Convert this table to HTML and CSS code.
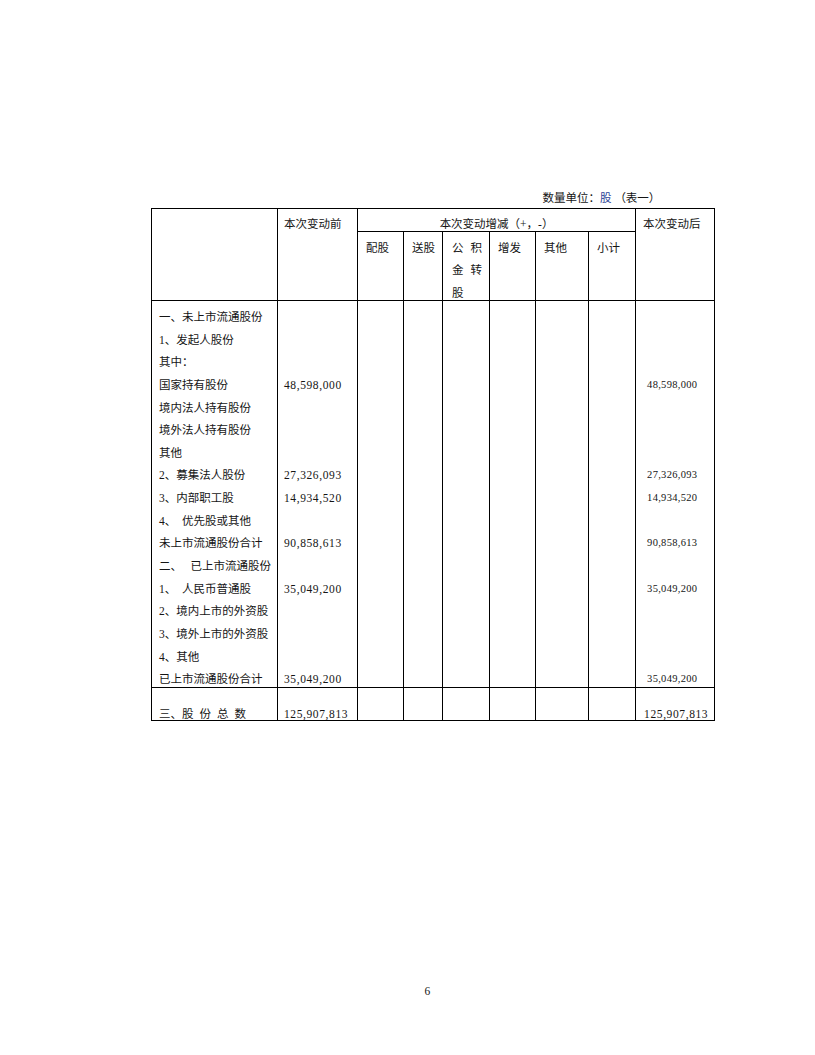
FILE: index.html
```html
<!DOCTYPE html>
<html lang="zh-CN">
<head>
<meta charset="utf-8">
<title>股本变动表</title>
<link rel="stylesheet" href="styles.css">
</head>
<body>
<div class="page">
  <div class="caption">数量单位：<span class="unit">股</span> （表一）</div>
  <table class="shares">
    <colgroup>
      <col class="c1"><col class="c2"><col class="c3"><col class="c4"><col class="c5"><col class="c6"><col class="c7"><col class="c8"><col class="c9">
    </colgroup>
    <tr class="h1">
      <td rowspan="2"></td>
      <td rowspan="2" class="hd p6">本次变动前</td>
      <td colspan="6" class="hd center">本次变动增减（+，-）</td>
      <td rowspan="2" class="hd p7">本次变动后</td>
    </tr>
    <tr class="h2">
      <td class="sub">配股</td>
      <td class="sub">送股</td>
      <td class="sub gj">
        <div class="stack">
          <div class="jl"><span>公</span><span>积</span></div>
          <div class="jl"><span>金</span><span>转</span></div>
          <div class="jl"><span>股</span></div>
        </div>
      </td>
      <td class="sub">增发</td>
      <td class="sub">其他</td>
      <td class="sub">小计</td>
    </tr>
    <tr class="body">
      <td>
        <div class="lines p7">
          <div class="ln">一、未上市流通股份</div>
          <div class="ln">1、发起人股份</div>
          <div class="ln">其中：</div>
          <div class="ln">国家持有股份</div>
          <div class="ln">境内法人持有股份</div>
          <div class="ln">境外法人持有股份</div>
          <div class="ln">其他</div>
          <div class="ln">2、募集法人股份</div>
          <div class="ln">3、内部职工股</div>
          <div class="ln">4、&nbsp;&nbsp;优先股或其他</div>
          <div class="ln">未上市流通股份合计</div>
          <div class="ln">二、&nbsp;&nbsp;&nbsp;已上市流通股份</div>
          <div class="ln">1、&nbsp;&nbsp;人民币普通股</div>
          <div class="ln">2、境内上市的外资股</div>
          <div class="ln">3、境外上市的外资股</div>
          <div class="ln">4、其他</div>
          <div class="ln">已上市流通股份合计</div>
        </div>
      </td>
      <td>
        <div class="lines p6 num">
          <div class="ln"></div>
          <div class="ln"></div>
          <div class="ln"></div>
          <div class="ln">48,598,000</div>
          <div class="ln"></div>
          <div class="ln"></div>
          <div class="ln"></div>
          <div class="ln">27,326,093</div>
          <div class="ln">14,934,520</div>
          <div class="ln"></div>
          <div class="ln">90,858,613</div>
          <div class="ln"></div>
          <div class="ln">35,049,200</div>
          <div class="ln"></div>
          <div class="ln"></div>
          <div class="ln"></div>
          <div class="ln">35,049,200</div>
        </div>
      </td>
      <td></td><td></td><td></td><td></td><td></td><td></td>
      <td>
        <div class="lines p11 num2">
          <div class="ln"></div>
          <div class="ln"></div>
          <div class="ln"></div>
          <div class="ln">48,598,000</div>
          <div class="ln"></div>
          <div class="ln"></div>
          <div class="ln"></div>
          <div class="ln">27,326,093</div>
          <div class="ln">14,934,520</div>
          <div class="ln"></div>
          <div class="ln">90,858,613</div>
          <div class="ln"></div>
          <div class="ln">35,049,200</div>
          <div class="ln"></div>
          <div class="ln"></div>
          <div class="ln"></div>
          <div class="ln">35,049,200</div>
        </div>
      </td>
    </tr>
    <tr class="total">
      <td><div class="tot p7">三、<span class="spread">股份总</span>数</div></td>
      <td><div class="tot p6 num">125,907,813</div></td>
      <td></td><td></td><td></td><td></td><td></td><td></td>
      <td><div class="tot p8 num">125,907,813</div></td>
    </tr>
  </table>
  <div class="pageno">6</div>
</div>
</body>
</html>
```
FILE: styles.css
```css
html, body {
  margin: 0;
  padding: 0;
  background: #ffffff;
}

body {
  font-family: "Liberation Serif", "Noto Sans CJK SC", serif;
  font-size: 11.5px;
  color: #151515;
}

.page {
  width: 815px;
  height: 1055px;
  box-sizing: border-box;
  padding-top: 189px;
  overflow: hidden;
}

.caption {
  margin-left: 542.5px;
  height: 19px;
  line-height: 19px;
  white-space: nowrap;
}

.unit {
  color: #2b3f96;
}

.shares {
  margin-left: 151px;
  border-collapse: collapse;
  table-layout: fixed;
  width: 564px;
}

.c1 { width: 126px; }
.c2 { width: 80px; }
.c3 { width: 46px; }
.c4 { width: 39px; }
.c5 { width: 47px; }
.c6 { width: 46px; }
.c7 { width: 53px; }
.c8 { width: 47px; }
.c9 { width: 79px; }

.shares td {
  border: 1px solid #000000;
  padding: 0;
  vertical-align: top;
  white-space: nowrap;
}

.h1 { height: 23px; }
.h2 { height: 69px; }
.body { height: 387px; }
.total { height: 33px; }

.shares td.hd {
  padding-top: 7.5px;
  line-height: 14px;
}

.shares td.center {
  text-align: center;
}

.shares td.sub {
  padding: 4.5px 0 0 8px;
  line-height: 22.66px;
}

.shares td.gj {
  padding: 4.5px 7px 0 9px;
}

.stack {
  height: 60px;
}

.jl {
  display: flex;
  justify-content: space-between;
  height: 22.66px;
  line-height: 22.66px;
}

.lines {
  height: 380px;
  padding-top: 4.9px;
}

.ln {
  height: 22.66px;
  line-height: 22.66px;
  white-space: nowrap;
}

.p6 { padding-left: 6px; }
.shares td.p6 { padding-left: 6px; }
.p7 { padding-left: 7px; }
.shares td.p7 { padding-left: 7px; }
.p8 { padding-left: 8px; }
.p11 { padding-left: 11px; }

.num {
  letter-spacing: 0.6px;
}

.num2 {
  font-size: 10.5px;
  letter-spacing: 0.3px;
}

.tot {
  box-sizing: border-box;
  height: 32px;
  padding-top: 17.8px;
  line-height: 16px;
  white-space: nowrap;
}

.spread {
  letter-spacing: 6px;
}

.pageno {
  margin-top: 261.5px;
  margin-left: 424.5px;
  line-height: 16px;
}
```
